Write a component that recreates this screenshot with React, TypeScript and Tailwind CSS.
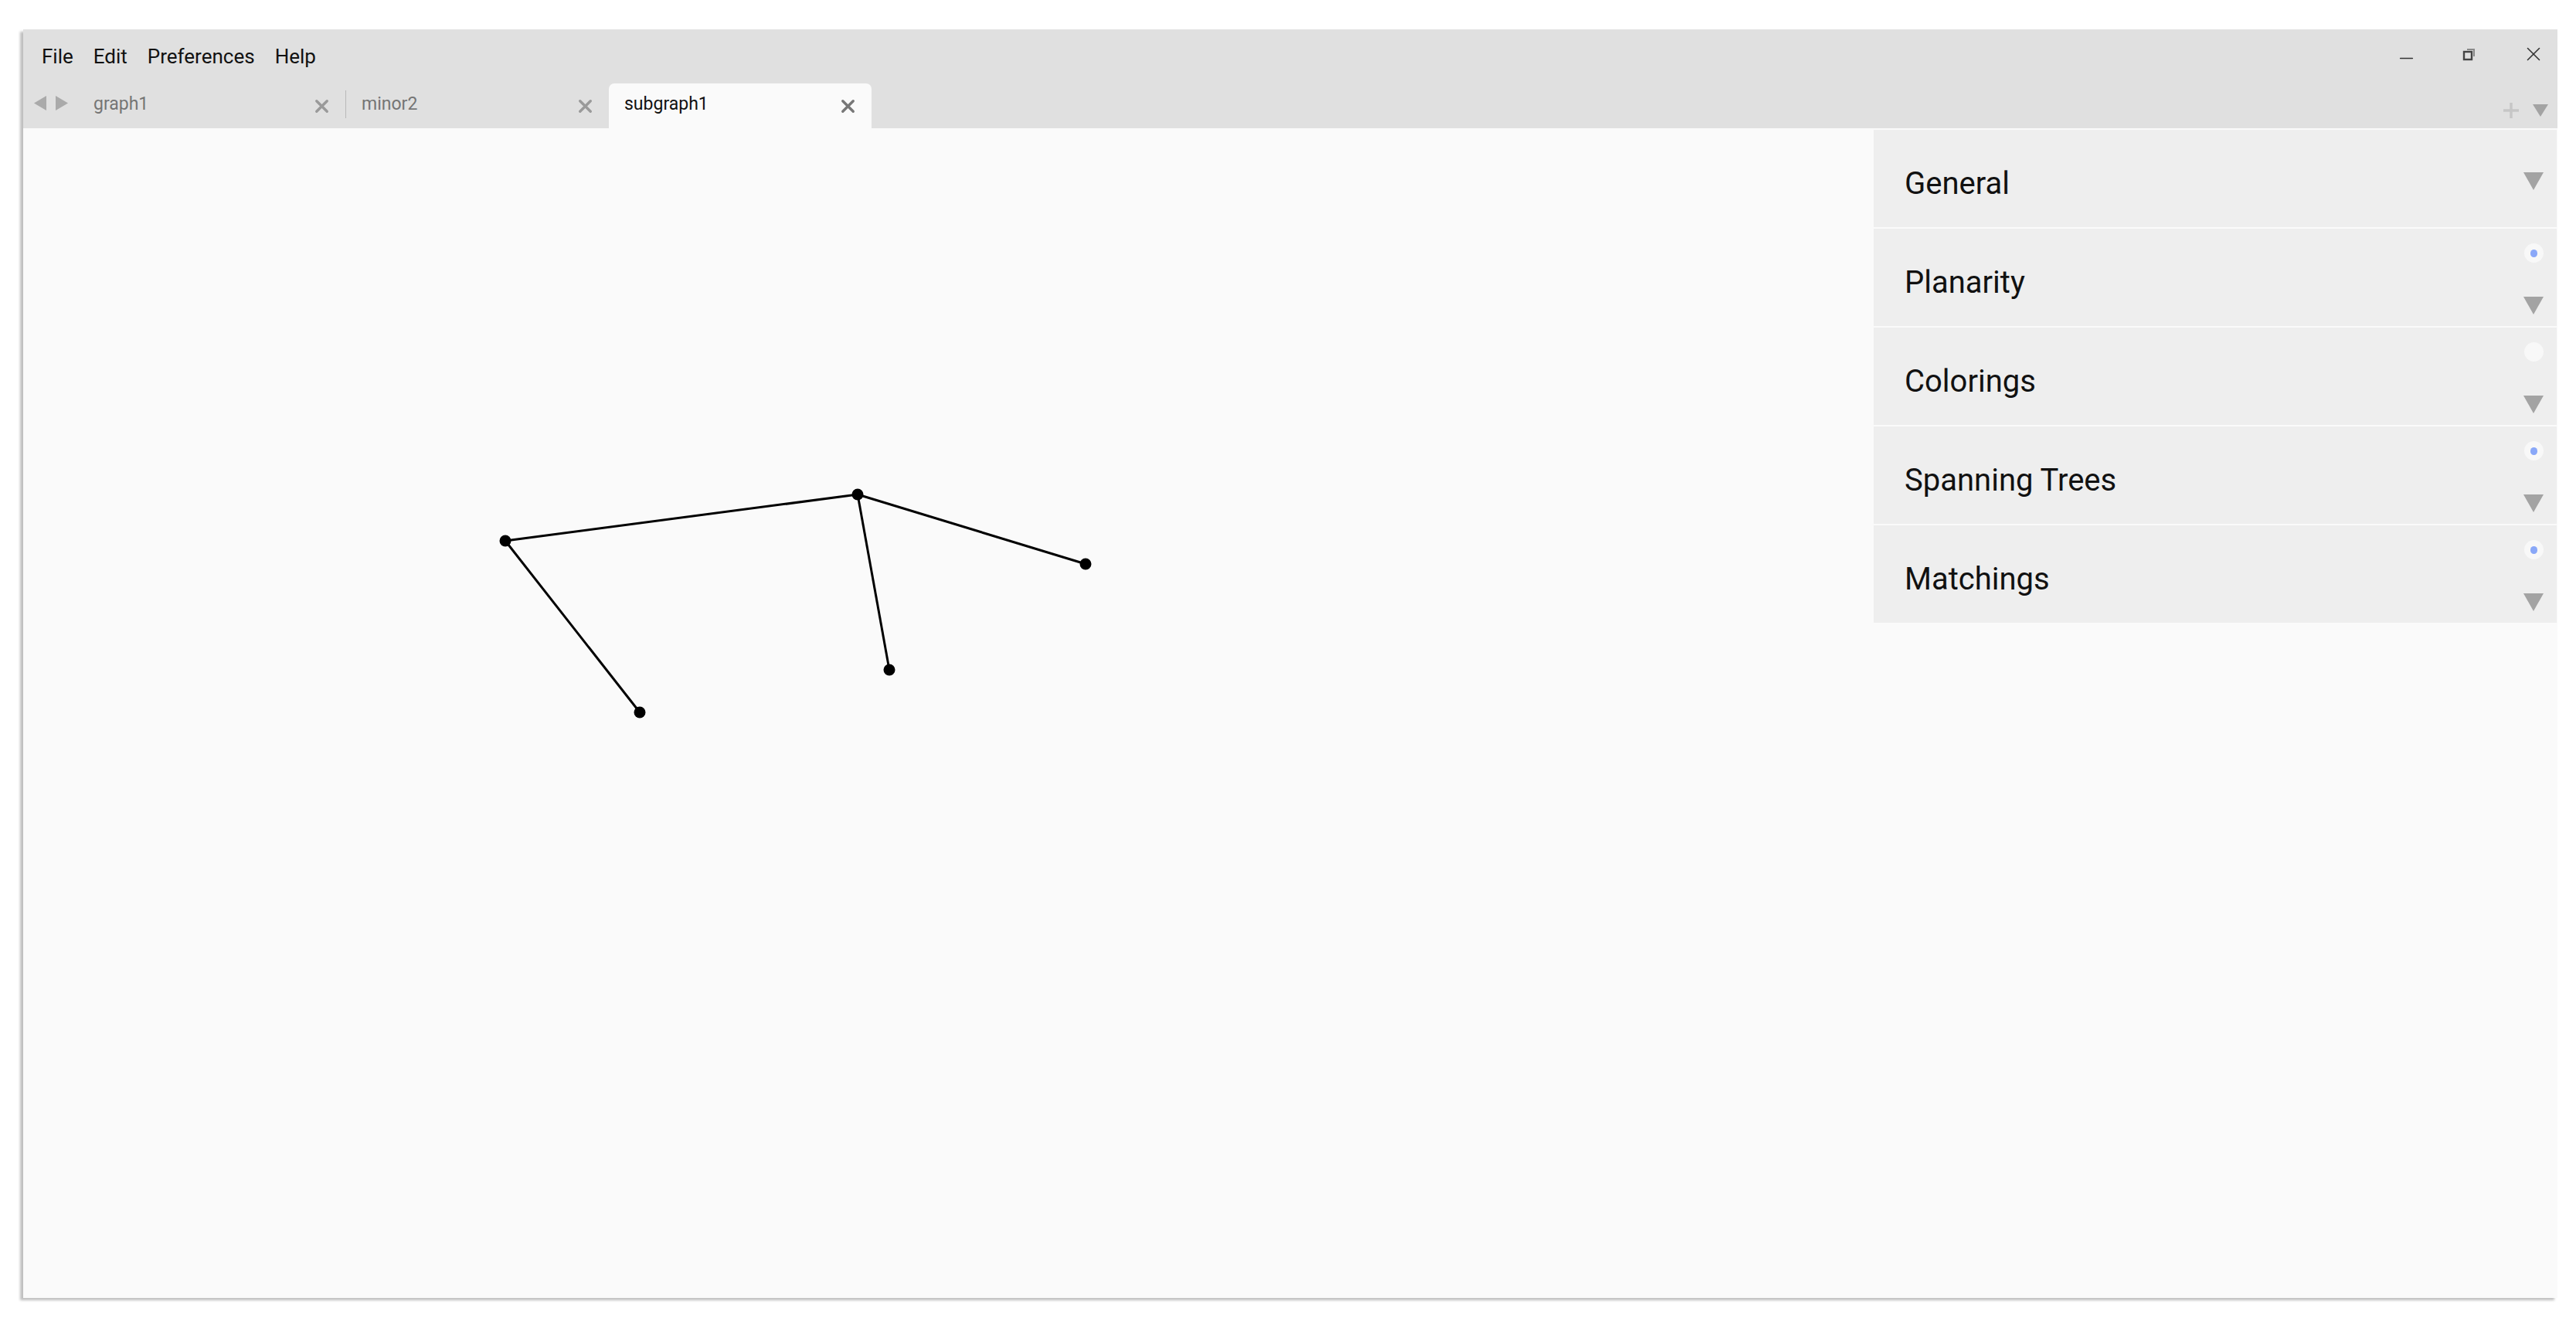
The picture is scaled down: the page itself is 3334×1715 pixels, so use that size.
import { Minus, X } from 'lucide-react'

const menus = ['File', 'Edit', 'Preferences', 'Help']

const sections = [
  { title: 'General', dot: null },
  { title: 'Planarity', dot: 'blue' },
  { title: 'Colorings', dot: 'empty' },
  { title: 'Spanning Trees', dot: 'blue' },
  { title: 'Matchings', dot: 'blue' },
]

const nodes: Record<string, [number, number]> = {
  a: [624, 534],
  b: [1080, 474],
  c: [1375, 564],
  d: [1121, 701],
  e: [798, 756],
}

const edges: [string, string][] = [
  ['a', 'b'],
  ['a', 'e'],
  ['b', 'd'],
  ['b', 'c'],
]

function Caret() {
  return (
    <svg width="26" height="23" viewBox="0 0 26 23">
      <polygon points="0,0 26,0 13,23" fill="#a3a3a3" />
    </svg>
  )
}

function StatusDot({ kind }: { kind: string }) {
  return (
    <div className="w-[25px] h-[25px] rounded-full bg-[#f8f8f8] flex items-center justify-center">
      {kind === 'blue' && <div className="w-[9px] h-[10px] rounded-full bg-[#8aa8f8]" />}
    </div>
  )
}

function Tab({
  label,
  active,
  width,
}: {
  label: string
  active?: boolean
  width: string
}) {
  return (
    <div
      className={`${width} h-[58px] flex items-center justify-between pl-[20px] pr-[17px] text-[23px] ${
        active ? 'bg-[#fafafa] rounded-t-[7px] text-[#111]' : 'text-[#757575]'
      }`}
    >
      <span className="pb-[4px]">{label}</span>
      <X size={27} strokeWidth={3} className={active ? 'text-[#777]' : 'text-[#9a9a9a]'} />
    </div>
  )
}

export default function App() {
  return (
    <div className="w-[3334px] h-[1715px] bg-white pt-[38px] pl-[30px] font-['Roboto',sans-serif]">
      <div className="w-[3280px] h-[1642px] flex flex-col shadow-[-4px_3px_3px_rgba(0,0,0,0.25)]">
        <header className="bg-[#e0e0e0] h-[128px] flex flex-col">
          <div className="h-[70px] flex items-center">
            <nav className="flex gap-[26px] pl-[24px] text-[26px] text-[#111]">
              {menus.map((m) => (
                <button key={m} className="cursor-pointer">
                  {m}
                </button>
              ))}
            </nav>
            <div className="ml-auto flex items-center gap-[58px] pr-[16px] text-[#333]">
              <Minus size={27} strokeWidth={1.3} className="mt-[4px]" />
              <svg width="20" height="20" viewBox="0 0 20 20" className="mb-[6px]">
                <path d="M7 4 H16 V13" fill="none" stroke="#8a8a8a" strokeWidth="2" />
                <rect x="3" y="7" width="10" height="10" fill="none" stroke="#444" strokeWidth="2.4" />
              </svg>
              <X size={30} strokeWidth={1.3} className="mb-[6px]" />
            </div>
          </div>
          <div className="flex-1 flex items-end">
            <div className="w-[71px] h-[58px] pl-[14px] flex items-center gap-[12px] pb-[8px]">
              <svg width="16" height="19" viewBox="0 0 16 19">
                <polygon points="16,0 16,19 0,9.5" fill="#aaa" />
              </svg>
              <svg width="16" height="19" viewBox="0 0 16 19">
                <polygon points="0,0 0,19 16,9.5" fill="#aaa" />
              </svg>
            </div>
            <Tab label="graph1" width="w-[346px]" />
            <div className="w-[1px] h-[36px] bg-[#b8b8b8] self-start mt-[9px]" />
            <Tab label="minor2" width="w-[340px]" />
            <Tab label="subgraph1" width="w-[340px]" active />
            <div className="ml-auto h-[58px] flex items-center gap-[18px] pr-[12px] pt-[12px]">
              <svg width="20" height="20" viewBox="0 0 20 20">
                <path d="M10 0 V20 M0 10 H20" stroke="#c6c6c6" strokeWidth="3.5" />
              </svg>
              <svg width="20" height="16" viewBox="0 0 20 16">
                <polygon points="0,0 20,0 10,16" fill="#a3a3a3" />
              </svg>
            </div>
          </div>
        </header>

        <main className="flex-1 flex bg-[#fafafa]">
          <div className="flex-1 relative">
            <svg className="absolute inset-0 w-full h-full">
              {edges.map(([f, t]) => (
                <line
                  key={f + t}
                  x1={nodes[f][0]}
                  y1={nodes[f][1]}
                  x2={nodes[t][0]}
                  y2={nodes[t][1]}
                  stroke="#000"
                  strokeWidth="3"
                />
              ))}
              {Object.entries(nodes).map(([k, [x, y]]) => (
                <circle key={k} cx={x} cy={y} r="7.5" fill="#000" />
              ))}
            </svg>
          </div>
          <aside className="w-[884px] mt-[2px] mr-[1px] self-start flex flex-col gap-[2px]">
            {sections.map((s) => (
              <div key={s.title} className="h-[126px] bg-[#eeeeee] flex items-center pl-[40px] pr-[17px]">
                <span className="text-[40px] text-[#111] pt-[13px]">{s.title}</span>
                {s.dot ? (
                  <div className="ml-auto h-full flex flex-col items-center justify-between pt-[19px] pb-[15px]">
                    <StatusDot kind={s.dot} />
                    <Caret />
                  </div>
                ) : (
                  <div className="ml-auto pt-[7px]">
                    <Caret />
                  </div>
                )}
              </div>
            ))}
          </aside>
        </main>
      </div>
    </div>
  )
}
